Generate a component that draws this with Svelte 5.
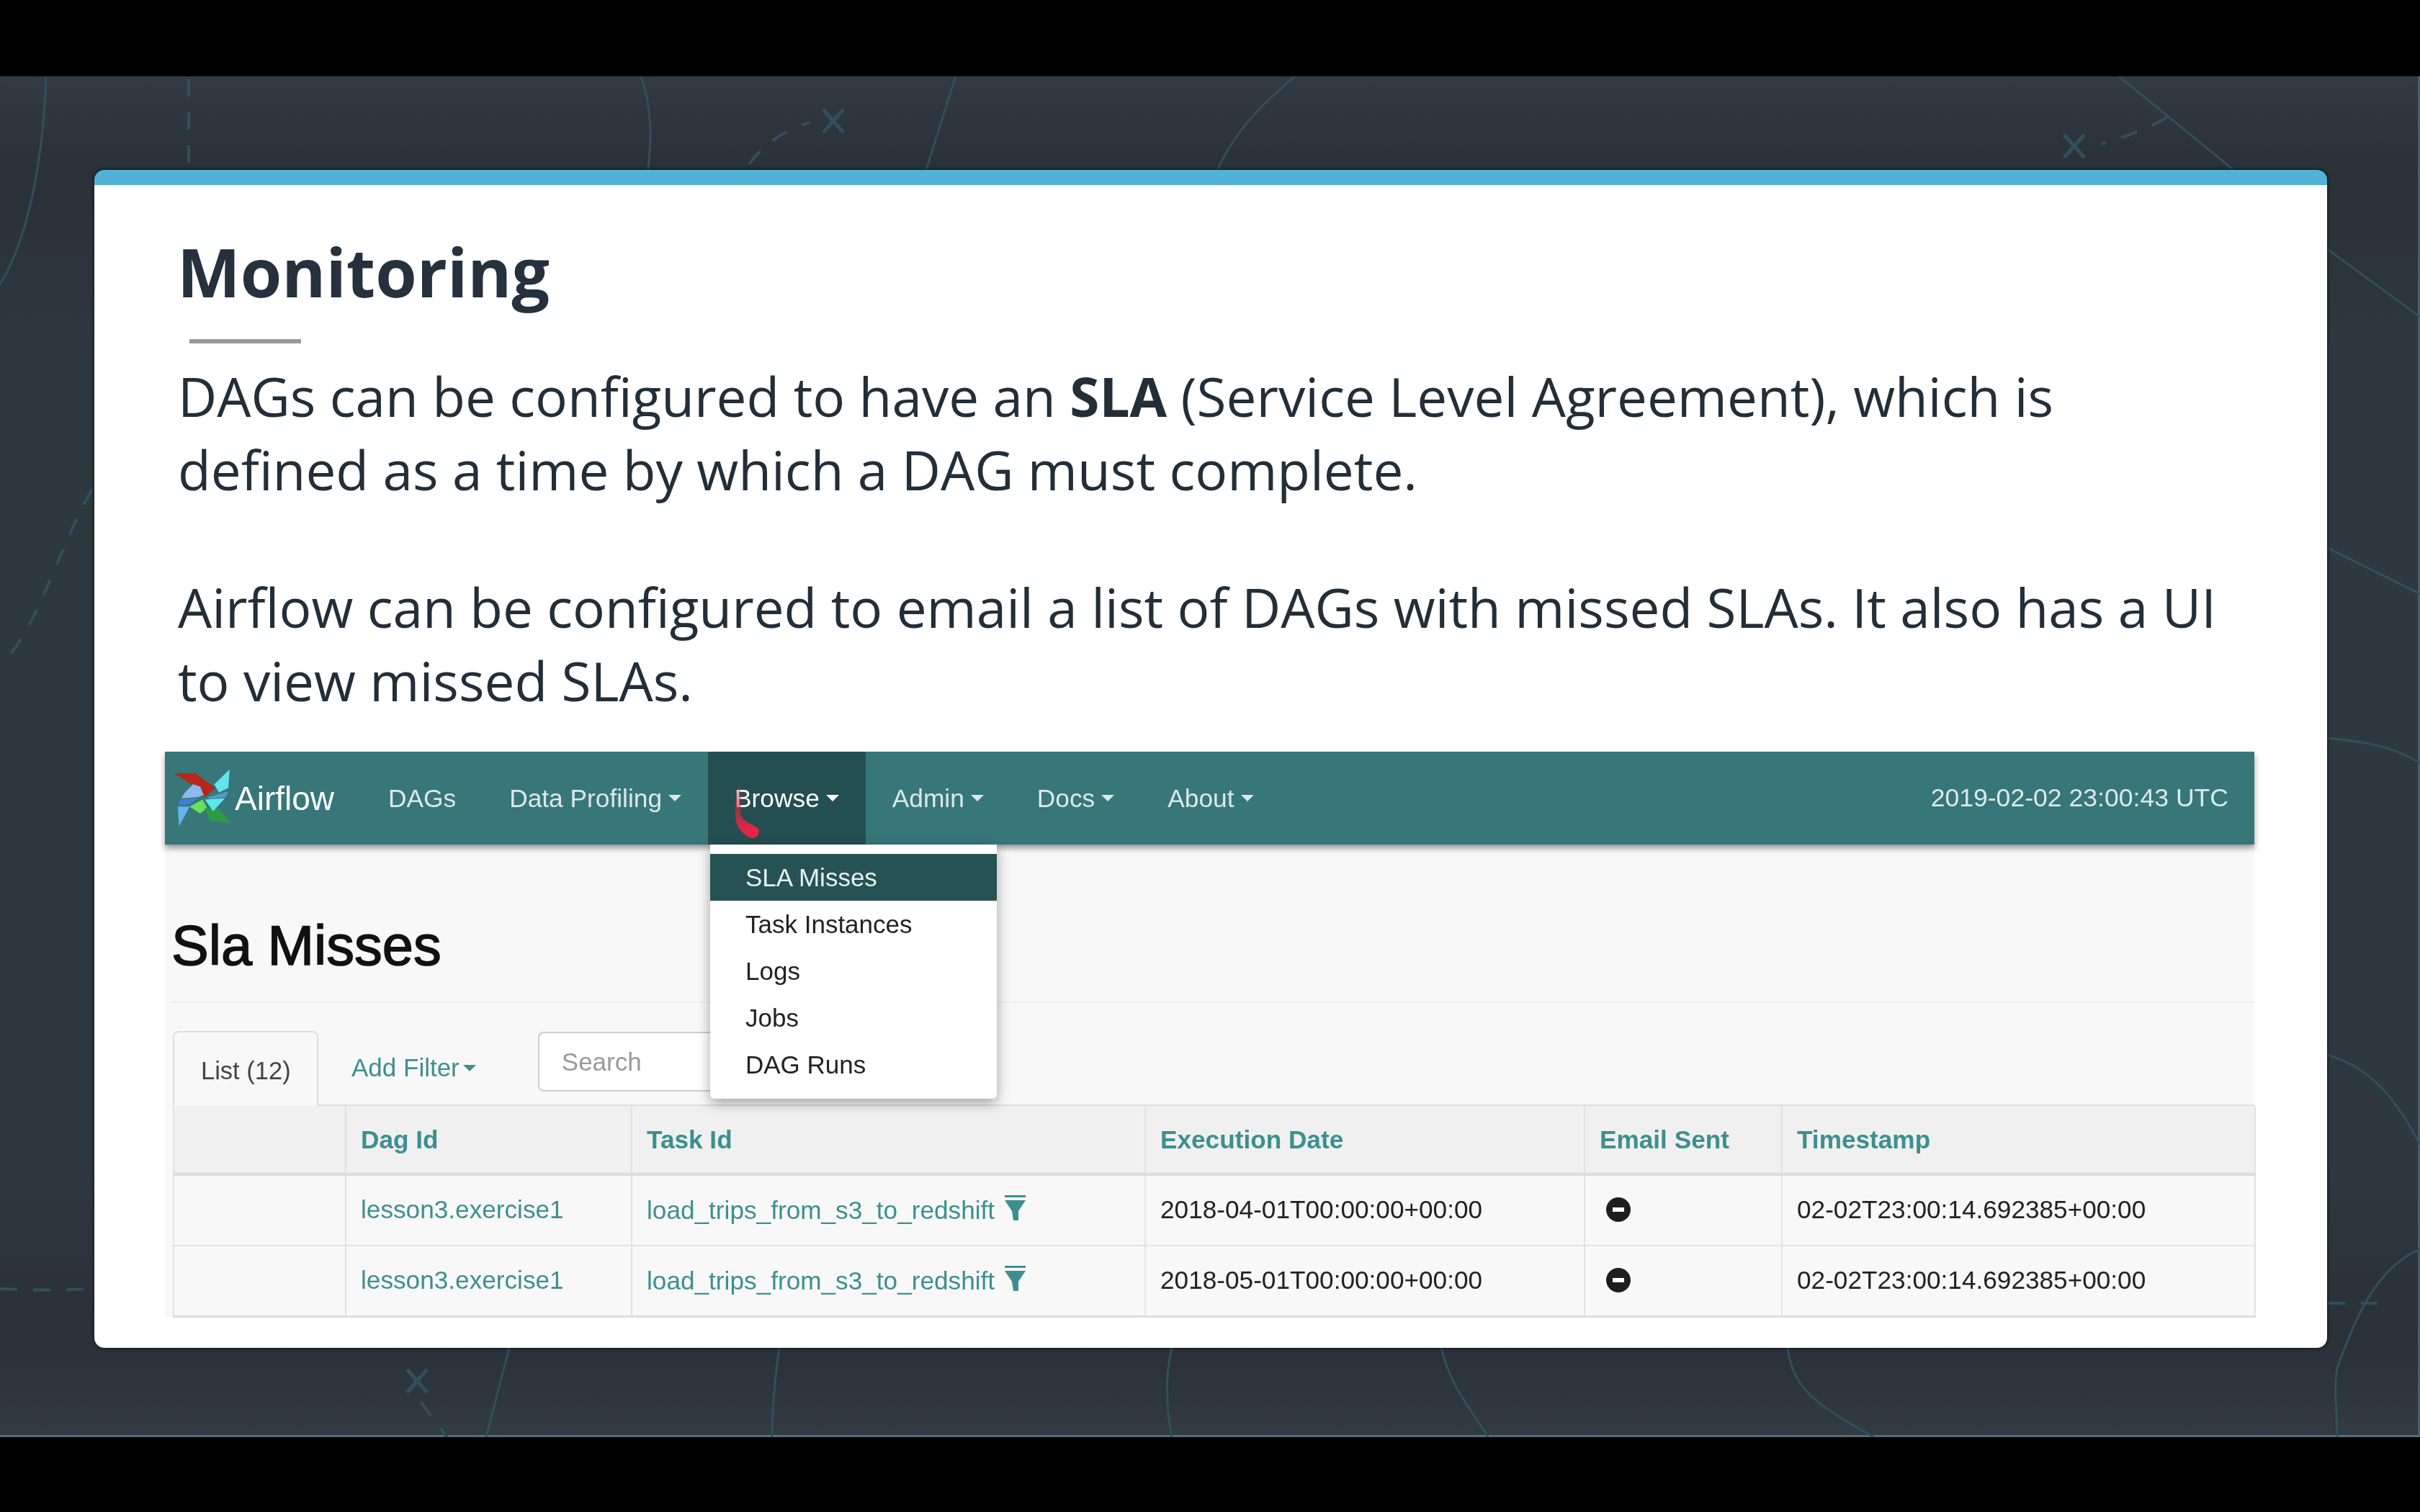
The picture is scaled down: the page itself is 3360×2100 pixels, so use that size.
<script>
  const navItems = [
    { label: 'DAGs' },
    { label: 'Data Profiling', caret: true },
    { label: 'Browse', caret: true, active: true },
    { label: 'Admin', caret: true },
    { label: 'Docs', caret: true },
    { label: 'About', caret: true }
  ];

  const browseMenu = ['SLA Misses', 'Task Instances', 'Logs', 'Jobs', 'DAG Runs'];

  const columns = [
    { label: '', width: 239 },
    { label: 'Dag Id', width: 397 },
    { label: 'Task Id', width: 713 },
    { label: 'Execution Date', width: 610 },
    { label: 'Email Sent', width: 274 },
    { label: 'Timestamp', width: 657 }
  ];

  const misses = [
    { date: '2018-04-01T00:00:00+00:00' },
    { date: '2018-05-01T00:00:00+00:00' }
  ];

  // doodles on the slide background, in screen coordinates
  const lines = [
    'M64 106C60 220 40 330 0 395',
    'M890 106C905 150 905 190 900 235',
    'M1327 106L1286 235',
    'M1798 106C1745 150 1710 190 1691 235',
    'M2942 106L3100 235',
    'M3230 345L3360 440',
    'M3230 760L3360 825',
    'M3230 1025C3280 1030 3320 1035 3360 1060',
    'M3230 1465C3290 1480 3330 1530 3360 1590',
    'M3360 1735C3300 1760 3270 1830 3245 1900C3240 1930 3245 1960 3245 1996',
    'M707 1872L675 1996',
    'M1082 1872C1075 1920 1072 1960 1072 1996',
    'M1627 1872C1618 1910 1618 1950 1627 1996',
    'M2001 1872C2015 1930 2045 1960 2066 1996',
    'M2482 1872C2490 1930 2520 1950 2602 1996'
  ];

  const dashed = [
    'M262 110L262 226',
    'M1040 228C1060 200 1090 180 1125 170',
    'M3009 163C2980 180 2950 190 2918 200',
    'M128 680C90 740 50 880 3 920',
    'M0 1790C40 1792 90 1792 129 1790',
    'M3232 1810L3300 1810',
    'M584 1947L621 1996'
  ];

  const crosses = [[1157, 168], [2880, 203], [579, 1918]];
</script>

<div class="screen">
  <div class="stage">
    <svg class="doodles" viewBox="0 106 3360 1890" width="3360" height="1890" fill="none" stroke="#30505c" stroke-width="3">
      {#each lines as d}
        <path {d} />
      {/each}
      {#each dashed as d}
        <path {d} stroke-dasharray="24 22" stroke-width="4" />
      {/each}
      {#each crosses as [x, y]}
        <path d="M{x - 14} {y - 16}L{x + 14} {y + 16}M{x + 14} {y - 16}L{x - 14} {y + 16}" stroke-width="5" />
      {/each}
    </svg>

    <section class="card">
      <h1>Monitoring</h1>
      <div class="rule"></div>
      <p>DAGs can be configured to have an <b>SLA</b> (Service Level Agreement), which is<br />defined as a time by which a DAG must complete.</p>
      <p>Airflow can be configured to email a list of DAGs with missed SLAs. It also has a UI<br />to view missed SLAs.</p>

      <div class="app">
        <nav class="navbar">
          <div class="brand">
            <svg class="logo" viewBox="50 50 245 248" width="80" height="81">
              <polygon points="50,68 140,68 225,130 180,170 150,120 120,115" fill="#b5281c" />
              <polygon points="285,52 220,115 240,150 280,130" fill="#62e3ee" />
              <polygon points="130,115 95,150 80,175 150,170 175,160 160,125" fill="#8fb8ec" />
              <polygon points="75,180 155,175 110,200 70,205" fill="#3f7fd8" />
              <polygon points="115,210 70,295 65,210" fill="#64b4ee" />
              <polygon points="190,170 280,145 270,170 200,178" fill="#4f9cc0" />
              <polygon points="115,210 170,180 190,215 160,240" fill="#66e25a" />
              <polygon points="180,215 240,220 290,280 200,270" fill="#2f9a45" />
              <polygon points="180,180 265,175 215,230" fill="#5ce6ee" />
            </svg>
            <span>Airflow</span>
          </div>
          {#each navItems as item}
            <a class="nav-item" class:active={item.active} href="#top">
              {item.label}
              {#if item.caret}<i class="caret"></i>{/if}
            </a>
          {/each}
          <span class="clock">2019-02-02 23:00:43 UTC</span>

          <svg class="pointer" viewBox="0 0 40 84" width="40" height="84">
            <defs>
              <linearGradient id="trail" x1="0" y1="0" x2="0" y2="1">
                <stop offset="0" stop-color="#d92545" stop-opacity="0.25" />
                <stop offset="0.55" stop-color="#d92545" stop-opacity="0.7" />
                <stop offset="0.8" stop-color="#e0254a" />
              </linearGradient>
            </defs>
            <path d="M8 0C10 16 10 32 9 44C12 52 24 56 33 62C38 68 32 78 24 76C10 70 1 58 2 42C2 28 3 14 8 0Z" fill="url(#trail)" />
          </svg>

          <ul class="menu">
            {#each browseMenu as entry, i}
              <li class:current={i === 0}>{entry}</li>
            {/each}
          </ul>
        </nav>

        <div class="page">
          <h2>Sla Misses</h2>
          <div class="tabs">
            <div class="tab">List (12)</div>
            <a class="filter" href="#top">Add Filter<i class="caret"></i></a>
            <div class="search">Search</div>
          </div>
          <table>
            <colgroup>
              {#each columns as col}
                <col style="width: {col.width}px" />
              {/each}
            </colgroup>
            <thead>
              <tr>
                {#each columns as col}
                  <th>{col.label}</th>
                {/each}
              </tr>
            </thead>
            <tbody>
              {#each misses as miss}
                <tr>
                  <td></td>
                  <td><a href="#top">lesson3.exercise1</a></td>
                  <td>
                    <a href="#top">load_trips_from_s3_to_redshift</a>
                    <svg class="funnel" viewBox="0 0 29 35" width="29" height="35">
                      <rect x="0" y="0" width="29" height="3" fill="#3d8f8f" />
                      <path d="M0 7H29L19 22V35H12L10 22Z" fill="#3d8f8f" />
                    </svg>
                  </td>
                  <td>{miss.date}</td>
                  <td>
                    <svg class="sent" viewBox="0 0 34 34" width="34" height="34">
                      <circle cx="17" cy="17" r="17" fill="#1e1e1e" />
                      <rect x="9" y="14" width="16" height="6" fill="#fff" />
                    </svg>
                  </td>
                  <td>02-02T23:00:14.692385+00:00</td>
                </tr>
              {/each}
            </tbody>
          </table>
        </div>
      </div>
    </section>
  </div>
</div>

<style>
  :global(body) {
    margin: 0;
    background: #000;
  }

  .screen {
    width: 3360px;
    height: 2100px;
    padding-top: 106px;
    box-sizing: border-box;
    background: #000;
    overflow: hidden;
  }

  .stage {
    position: relative;
    height: 1890px;
    box-sizing: border-box;
    padding: 130px 131px 0;
    border-bottom: 3px solid #566e79;
    border-right: 3px solid #4d5a63;
    background: linear-gradient(#323a42, #2a3137 7%, #2e383f 20%, #2e383f 80%, #2a3137 93%, #323a42);
  }

  .doodles {
    position: absolute;
    top: 0;
    left: 0;
  }

  .card {
    position: relative;
    width: 3100px;
    height: 1636px;
    box-sizing: border-box;
    padding: 0 0 0 116px;
    background: #fff;
    border-top: 21px solid #51b2d6;
    border-radius: 14px;
    box-shadow: 0 0 4px 1px #0b1a20;
    color: #222e38;
    font-family: 'Open Sans', sans-serif;
  }

  h1 {
    margin: 0 0 0 -1px;
    padding-top: 58px;
    font-size: 93px;
    line-height: 125px;
    font-weight: 700;
    color: #25313c;
  }

  .rule {
    width: 155px;
    height: 6px;
    margin: 31px 0 0 16px;
    background: #999;
  }

  p {
    margin: 0 0 89px;
    font-size: 74.7px;
    line-height: 102px;
    font-weight: 400;
    white-space: nowrap;
  }

  .rule + p {
    margin-top: 22px;
  }

  .app {
    width: 2901px;
    height: 785px;
    margin: -41px 0 0 -18px;
    background: #f8f8f8;
    font-family: 'Liberation Sans', Arial, sans-serif;
    font-size: 35px;
    filter: blur(0.6px);
  }

  .navbar {
    position: relative;
    display: flex;
    align-items: center;
    height: 129px;
    background: #377779;
    box-shadow: 0 5px 8px rgba(0, 0, 0, 0.4);
    color: #dbe8e8;
    font-size: 35.3px;
  }

  .brand {
    display: flex;
    align-items: center;
    gap: 4px;
    padding-left: 13px;
    margin-right: 38px;
    font-size: 46px;
    color: #fff;
  }

  .nav-item {
    display: flex;
    align-items: center;
    gap: 9px;
    height: 100%;
    padding: 0 37px;
    color: inherit;
    text-decoration: none;
  }

  .nav-item.active {
    background: #244f50;
    color: #fff;
  }

  .caret {
    display: inline-block;
    width: 0;
    height: 0;
    border-top: 9px solid currentColor;
    border-left: 9px solid transparent;
    border-right: 9px solid transparent;
  }

  .clock {
    margin-left: auto;
    padding-right: 36px;
    font-size: 35.6px;
  }

  .pointer {
    position: absolute;
    left: 790px;
    top: 44px;
  }

  .menu {
    position: absolute;
    left: 757px;
    top: 129px;
    z-index: 2;
    width: 398px;
    margin: 0;
    padding: 13px 0 15px;
    list-style: none;
    background: #fff;
    border-radius: 0 0 6px 6px;
    box-shadow: 0 6px 18px rgba(0, 0, 0, 0.35);
    color: #222;
    font-size: 35px;
  }

  .menu li {
    height: 65px;
    padding-left: 49px;
    line-height: 65px;
  }

  .menu li.current {
    background: #265253;
    color: #e8f2f2;
  }

  .page {
    padding: 0 0 0 11px;
  }

  h2 {
    height: 220px;
    margin: 0;
    box-sizing: border-box;
    padding: 96px 0 0;
    margin-left: -2px;
    border-bottom: 2px solid #eee;
    font-size: 77.5px;
    line-height: 88px;
    font-weight: 400;
    color: #111;
    -webkit-text-stroke: 1.6px #111;
  }

  .tabs {
    display: flex;
    align-items: flex-end;
    height: 143px;
    box-sizing: border-box;
    border-bottom: 2px solid #ddd;
  }

  .tab {
    width: 202px;
    height: 104px;
    box-sizing: border-box;
    margin-bottom: -2px;
    padding: 34px 0 0 37px;
    background: #f8f8f8;
    border: 2px solid #ddd;
    border-bottom: none;
    border-radius: 8px 8px 0 0;
    color: #444;
    font-size: 34.5px;
  }

  .filter {
    display: flex;
    align-items: center;
    gap: 5px;
    align-self: flex-end;
    margin: 0 0 31px 46px;
    color: #3d8f8f;
    text-decoration: none;
  }

  .search {
    width: 320px;
    height: 83px;
    box-sizing: border-box;
    margin: 0 0 18px 86px;
    padding: 0 0 0 31px;
    line-height: 80px;
    background: #fff;
    border: 2px solid #ccc;
    border-radius: 8px;
    color: #999;
  }

  table {
    width: 2890px;
    table-layout: fixed;
    border-collapse: collapse;
    color: #222;
    font-size: 35.2px;
  }

  th {
    height: 93px;
    padding: 0 20px;
    text-align: left;
    background: #f0f0f0;
    border: 2px solid #e2e2e2;
    border-top: none;
    border-bottom: 4px solid #ddd;
    color: #3d8f8f;
    font-weight: 700;
  }

  td {
    height: 94px;
    padding: 0 20px 2px;
    border: 2px solid #e2e2e2;
    white-space: nowrap;
  }

  tbody tr:last-child td {
    border-bottom: 3px solid #ddd;
  }

  td a {
    color: #3d8f8f;
    text-decoration: none;
  }

  .funnel {
    vertical-align: -2px;
    margin-left: 4px;
  }

  .sent {
    display: block;
    margin-left: 9px;
  }
</style>
